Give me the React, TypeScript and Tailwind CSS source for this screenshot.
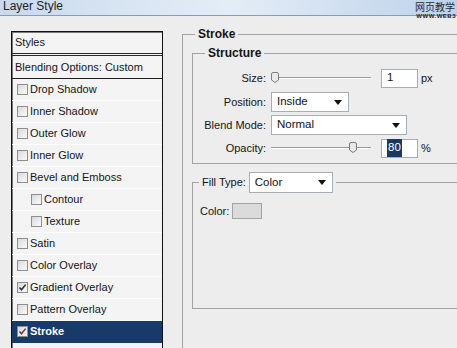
import React from 'react'

const effects = [
  { label: 'Drop Shadow' },
  { label: 'Inner Shadow' },
  { label: 'Outer Glow' },
  { label: 'Inner Glow' },
  { label: 'Bevel and Emboss' },
  { label: 'Contour', indent: true },
  { label: 'Texture', indent: true },
  { label: 'Satin' },
  { label: 'Color Overlay' },
  { label: 'Gradient Overlay', checked: true },
  { label: 'Pattern Overlay' },
  { label: 'Stroke', checked: true, selected: true },
]

function Check({ on, selected }: { on?: boolean; selected?: boolean }) {
  return (
    <span className="w-[11px] h-[11px] shrink-0 border border-[#8e8e8e] bg-gradient-to-br from-[#d9d9d9] to-[#fbfbfb] flex items-center justify-center">
      {on && (
        <svg width="9" height="9" viewBox="0 0 9 9">
          <path
            d="M1.5 4.5 L3.5 6.8 L7.6 1.6"
            stroke={selected ? '#8a2a3a' : '#2a2a2a'}
            strokeWidth="1.5"
            fill="none"
          />
        </svg>
      )}
    </span>
  )
}

function Arrow() {
  return (
    <svg width="8" height="5" viewBox="0 0 8 5" className="shrink-0">
      <path d="M0 0 H8 L4 5 Z" fill="#111" />
    </svg>
  )
}

function Select({ value, w, h = 20 }: { value: string; w: string; h?: number }) {
  return (
    <div
      className={`${w} flex items-center justify-between border border-[#a7adb5] bg-white pl-[5px] pr-[6px] text-[11.5px] text-[#111]`}
      style={{ height: h }}
    >
      <span>{value}</span>
      <Arrow />
    </div>
  )
}

function Slider({ at }: { at: number }) {
  return (
    <div className="relative w-[100px] h-[20px]">
      <div className="absolute left-0 right-0 top-[9px] h-[1px] bg-[#9c9c9c]" />
      <div className="absolute left-0 right-0 top-[10px] h-[1px] bg-white" />
      <svg
        width="8"
        height="11"
        viewBox="0 0 8 11"
        className="absolute top-[4px]"
        style={{ left: at }}
      >
        <path
          d="M0.5 2 Q0.5 0.5 2 0.5 H6 Q7.5 0.5 7.5 2 V8 L4 10.5 L0.5 8 Z"
          fill="#e9e9e9"
          stroke="#7d7d7d"
        />
      </svg>
    </div>
  )
}

function Field({ children, highlight }: { children: React.ReactNode; highlight?: boolean }) {
  return (
    <div className="ml-[10px] w-[37px] h-[19px] flex items-center border border-[#a7adb5] bg-white pl-[5px] text-[11.5px]">
      {highlight ? <span className="bg-[#1b3862] text-white px-[1px]">{children}</span> : children}
    </div>
  )
}

export default function App() {
  return (
    <div className="relative w-[457px] h-[348px] overflow-hidden bg-[#ededed] font-['Liberation_Sans',Arial,sans-serif] text-[11px] text-[#141414]">
      {/* title bar */}
      <div className="h-[16px] border-b border-[#8b9bb1] bg-gradient-to-r from-[#c9daed] via-[#e4edf6] to-[#bdd2ea] pl-[3px] text-[12px] leading-[12px] text-[#222]">
        Layer Style
      </div>
      <div className="absolute right-[2px] top-[1px] text-[10px] leading-[11px] text-[#2a2a2a] font-['Noto_Sans_CJK_SC',sans-serif]">
        网页教学
      </div>
      <div className="absolute right-[1px] top-[13px] text-[6px] leading-[7px] font-bold tracking-[0.5px] text-[#222]">
        WWW.WEB3
      </div>

      <div className="flex items-start">
        {/* styles list */}
        <div className="shrink-0 mt-[15px] ml-[11px] w-[152px] h-[330px] border border-[#111] bg-[#f4f4f4] shadow-[inset_1px_1px_0_#7a7a7a]">
          <div className="h-[24px] pl-[3px] flex items-center border-b-[3px] border-double border-[#2a2a2a]">
            Styles
          </div>
          <div className="h-[23px] pl-[3px] flex items-center border-b border-[#1e1e1e] whitespace-nowrap">
            Blending Options: Custom
          </div>
          {effects.map((e) => (
            <div
              key={e.label}
              className={`h-[22px] flex items-center gap-[2px] border-b whitespace-nowrap ${
                e.selected
                  ? 'bg-[#173a68] text-white font-bold border-[#173a68]'
                  : 'border-[#fdfdfd]'
              } ${e.indent ? 'pl-[19px]' : 'pl-[5px]'}`}
            >
              <Check on={e.checked} selected={e.selected} />
              <span>{e.label}</span>
            </div>
          ))}
        </div>

        {/* stroke settings */}
        <div className="shrink-0 ml-[19px] mt-[12px]">
          <fieldset className="w-[300px] h-[340px] border-l border-t border-[#a2a2a2]">
            <legend className="ml-[12px] px-[3px] text-[12px] leading-[13px] font-bold">Stroke</legend>
            <div className="pl-[9px] pt-[6px]">
              <fieldset className="w-[290px] h-[117px] border border-[#a2a2a2]">
                <legend className="ml-[12px] px-[3px] text-[12px] leading-[13px] font-bold">Structure</legend>
                <div className="mt-[8px] h-[20px] flex items-center">
                  <span className="w-[73px] text-right">Size:</span>
                  <div className="ml-[5px]">
                    <Slider at={0} />
                  </div>
                  <Field>1</Field>
                  <span className="ml-[3px]">px</span>
                </div>
                <div className="mt-[4px] h-[20px] flex items-center">
                  <span className="w-[73px] text-right">Position:</span>
                  <div className="ml-[5px]">
                    <Select value="Inside" w="w-[78px]" />
                  </div>
                </div>
                <div className="mt-[3px] h-[20px] flex items-center">
                  <span className="w-[73px] text-right">Blend Mode:</span>
                  <div className="ml-[5px]">
                    <Select value="Normal" w="w-[136px]" />
                  </div>
                </div>
                <div className="mt-[3px] h-[20px] flex items-center">
                  <span className="w-[73px] text-right">Opacity:</span>
                  <div className="ml-[5px]">
                    <Slider at={78} />
                  </div>
                  <Field highlight>80</Field>
                  <span className="ml-[3px]">%</span>
                </div>
              </fieldset>

              <fieldset className="mt-[8px] w-[290px] h-[137px] border border-[#a2a2a2]">
                <legend className="ml-[6px] px-[3px] flex items-center gap-[3px]">
                  <span>Fill Type:</span>
                  <Select value="Color" w="w-[84px]" h={21} />
                </legend>
                <div className="mt-[10px] pl-[7px] flex items-center gap-[3px]">
                  <span>Color:</span>
                  <span className="w-[30px] h-[16px] border border-[#a3a3a3] bg-[#dbdbdb]" />
                </div>
              </fieldset>
            </div>
          </fieldset>
        </div>
      </div>
    </div>
  )
}
